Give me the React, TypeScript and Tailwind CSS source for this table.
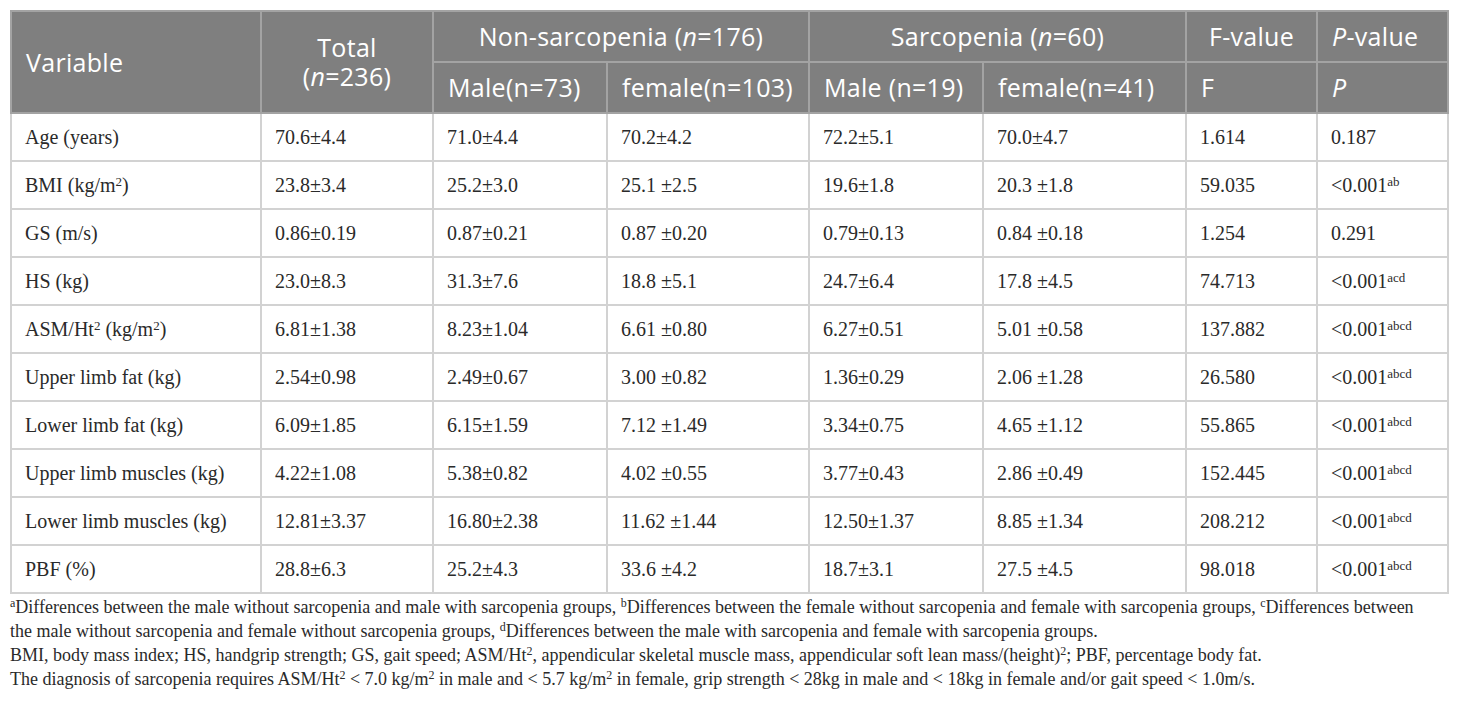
import React from 'react';

type Row = {
  label: React.ReactNode;
  vals: string[];
  f: string;
  p: string;
  sup?: string;
};

const rows: Row[] = [
  { label: 'Age (years)', vals: ['70.6±4.4', '71.0±4.4', '70.2±4.2', '72.2±5.1', '70.0±4.7'], f: '1.614', p: '0.187' },
  { label: <>BMI (kg/m<sup>2</sup>)</>, vals: ['23.8±3.4', '25.2±3.0', '25.1 ±2.5', '19.6±1.8', '20.3 ±1.8'], f: '59.035', p: '<0.001', sup: 'ab' },
  { label: 'GS (m/s)', vals: ['0.86±0.19', '0.87±0.21', '0.87 ±0.20', '0.79±0.13', '0.84 ±0.18'], f: '1.254', p: '0.291' },
  { label: 'HS (kg)', vals: ['23.0±8.3', '31.3±7.6', '18.8 ±5.1', '24.7±6.4', '17.8 ±4.5'], f: '74.713', p: '<0.001', sup: 'acd' },
  { label: <>ASM/Ht<sup>2</sup> (kg/m<sup>2</sup>)</>, vals: ['6.81±1.38', '8.23±1.04', '6.61 ±0.80', '6.27±0.51', '5.01 ±0.58'], f: '137.882', p: '<0.001', sup: 'abcd' },
  { label: 'Upper limb fat (kg)', vals: ['2.54±0.98', '2.49±0.67', '3.00 ±0.82', '1.36±0.29', '2.06 ±1.28'], f: '26.580', p: '<0.001', sup: 'abcd' },
  { label: 'Lower limb fat (kg)', vals: ['6.09±1.85', '6.15±1.59', '7.12 ±1.49', '3.34±0.75', '4.65 ±1.12'], f: '55.865', p: '<0.001', sup: 'abcd' },
  { label: 'Upper limb muscles (kg)', vals: ['4.22±1.08', '5.38±0.82', '4.02 ±0.55', '3.77±0.43', '2.86 ±0.49'], f: '152.445', p: '<0.001', sup: 'abcd' },
  { label: 'Lower limb muscles (kg)', vals: ['12.81±3.37', '16.80±2.38', '11.62 ±1.44', '12.50±1.37', '8.85 ±1.34'], f: '208.212', p: '<0.001', sup: 'abcd' },
  { label: 'PBF (%)', vals: ['28.8±6.3', '25.2±4.3', '33.6 ±4.2', '18.7±3.1', '27.5 ±4.5'], f: '98.018', p: '<0.001', sup: 'abcd' },
];

const hd = 'border-2 border-[#a3a3a3] font-normal';
const td = 'border-2 border-[#d2d2d2] pl-[13px] text-left align-middle';

export default function App() {
  return (
    <div className="bg-white w-[1460px] h-[706px] pl-[10px] pt-[10px]">
      <table className="table-fixed border-collapse w-[1439px]">
        <colgroup>
          <col className="w-[250px]" />
          <col className="w-[172px]" />
          <col className="w-[174px]" />
          <col className="w-[202px]" />
          <col className="w-[174px]" />
          <col className="w-[203px]" />
          <col className="w-[131px]" />
          <col className="w-[131px]" />
        </colgroup>
        <thead className="bg-[#7f7f7f] text-white text-[25px] leading-[29px] tracking-[0.3px] font-['Open_Sans',sans-serif]">
          <tr className="h-[51px]">
            <th rowSpan={2} className={`${hd} text-left pl-[14px]`}>Variable</th>
            <th rowSpan={2} className={`${hd} text-center`}>
              Total<br />(<i>n</i>=236)
            </th>
            <th colSpan={2} className={`${hd} text-center`}>Non-sarcopenia (<i>n</i>=176)</th>
            <th colSpan={2} className={`${hd} text-center`}>Sarcopenia (<i>n</i>=60)</th>
            <th className={`${hd} text-center`}>F-value</th>
            <th className={`${hd} text-left pl-[14px]`}><i>P</i>-value</th>
          </tr>
          <tr className="h-[51px]">
            <th className={`${hd} text-left pl-[14px]`}>Male(n=73)</th>
            <th className={`${hd} text-left pl-[14px]`}>female(n=103)</th>
            <th className={`${hd} text-left pl-[14px]`}>Male (n=19)</th>
            <th className={`${hd} text-left pl-[14px]`}>female(n=41)</th>
            <th className={`${hd} text-left pl-[14px]`}>F</th>
            <th className={`${hd} text-left pl-[14px]`}><i>P</i></th>
          </tr>
        </thead>
        <tbody className="text-[#2a2a2a] text-[20px] font-['Liberation_Serif',serif] [&_sup]:text-[13px]">
          {rows.map((r, i) => (
            <tr key={i} className="h-[48px]">
              <td className={td}>{r.label}</td>
              {r.vals.map((v, j) => (
                <td key={j} className={td}>{v}</td>
              ))}
              <td className={td}>{r.f}</td>
              <td className={td}>
                {r.p}
                {r.sup && <sup>{r.sup}</sup>}
              </td>
            </tr>
          ))}
        </tbody>
      </table>
      <div className="w-[1422px] text-[18px] leading-[24px] text-[#2a2a2a] font-['Liberation_Serif',serif] [&_sup]:text-[12px] pt-[1px]">
        <p>
          <sup>a</sup>Differences between the male without sarcopenia and male with sarcopenia groups, <sup>b</sup>Differences between the female without sarcopenia and female with sarcopenia groups, <sup>c</sup>Differences between the male without sarcopenia and female without sarcopenia groups, <sup>d</sup>Differences between the male with sarcopenia and female with sarcopenia groups.
        </p>
        <p>
          BMI, body mass index; HS, handgrip strength; GS, gait speed; ASM/Ht<sup>2</sup>, appendicular skeletal muscle mass, appendicular soft lean mass/(height)<sup>2</sup>; PBF, percentage body fat.
        </p>
        <p>
          The diagnosis of sarcopenia requires ASM/Ht<sup>2</sup> &lt; 7.0 kg/m<sup>2</sup> in male and &lt; 5.7 kg/m<sup>2</sup> in female, grip strength &lt; 28kg in male and &lt; 18kg in female and/or gait speed &lt; 1.0m/s.
        </p>
      </div>
    </div>
  );
}
